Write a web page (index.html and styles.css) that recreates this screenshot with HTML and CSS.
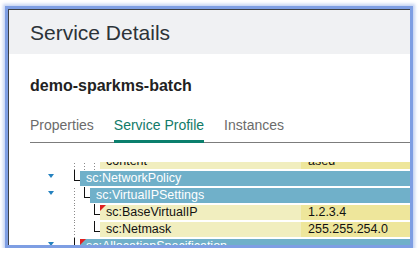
FILE: index.html
```html
<!DOCTYPE html>
<html lang="en">
<head>
    <meta charset="UTF-8">
    <meta name="viewport" content="width=device-width, initial-scale=1.0">
    <title>Service Details</title>
    <link rel="stylesheet" href="styles.css">
</head>
<body>
    <div class="frame">
        <div class="dialog">
            <div class="dialog-header">Service Details</div>
            <div class="dialog-body">
                <h2 class="service-name">demo-sparkms-batch</h2>
                <div class="tabs">
                    <span class="tab">Properties</span>
                    <span class="tab active">Service Profile</span>
                    <span class="tab">Instances</span>
                </div>
                <div class="tree">
                    <div class="tree-inner">
                        <div class="row">
                            <span class="toggle"></span>
                            <span class="guide dotted"></span><span class="guide dotted"></span><span class="guide dotted"></span>
                            <div class="node leaf"><span class="name">content</span><span class="value">ased</span></div>
                        </div>
                        <div class="row">
                            <span class="toggle open"></span>
                            <span class="branch"></span>
                            <div class="node group"><span class="name">sc:NetworkPolicy</span></div>
                        </div>
                        <div class="row">
                            <span class="toggle open"></span>
                            <span class="guide dotted"></span><span class="branch"></span>
                            <div class="node group"><span class="name">sc:VirtualIPSettings</span></div>
                        </div>
                        <div class="row">
                            <span class="toggle"></span>
                            <span class="guide dotted"></span><span class="guide"></span><span class="branch"></span>
                            <div class="node leaf flag"><span class="name">sc:BaseVirtualIP</span><span class="value">1.2.3.4</span></div>
                        </div>
                        <div class="row">
                            <span class="toggle"></span>
                            <span class="guide dotted"></span><span class="guide"></span><span class="branch"></span>
                            <div class="node leaf"><span class="name">sc:Netmask</span><span class="value">255.255.254.0</span></div>
                        </div>
                        <div class="row">
                            <span class="toggle open"></span>
                            <span class="branch"></span>
                            <div class="node group flag"><span class="name">sc:AllocationSpecification</span></div>
                        </div>
                    </div>
                </div>
            </div>
        </div>
    </div>
</body>
</html>
```
FILE: styles.css
```css
body {
    margin: 0;
    background: #fff;
    font-family: "Liberation Sans", Arial, sans-serif;
}

.frame {
    margin: 6px 0 0 5px;
    width: 402px;
    height: 236px;
    border: 3px solid #7e9ee3;
    box-shadow: 0 0 3px 2px rgba(126, 158, 227, 0.45);
}

.dialog {
    box-sizing: border-box;
    height: 236px;
    border-left: 1px solid #3c4046;
    border-top: 1px solid #3c4046;
    overflow: hidden;
    background: #fff;
}

.dialog-header {
    height: 44px;
    box-sizing: border-box;
    padding: 11px 0 0 21px;
    background: #f0f1f3;
    color: #2c3338;
    font-size: 21px;
    line-height: 24px;
}

.dialog-body {
    padding-top: 23px;
}

.service-name {
    margin: 0 0 22px 21px;
    font-size: 16px;
    line-height: 18px;
    font-weight: bold;
    color: #222;
}

.tabs {
    display: flex;
    margin-left: 21px;
    border-bottom: 1px solid #7c7c7c;
}

.tab {
    margin-right: 20px;
    margin-bottom: -1px;
    padding-bottom: 7px;
    border-bottom: 3px solid transparent;
    font-size: 14px;
    line-height: 16px;
    color: #6b6b6b;
}

.tab.active {
    color: #127a69;
    border-bottom-color: #0b7f6d;
}

.tree {
    margin-top: 19px;
    height: 90px;
    overflow: hidden;
}

.tree-inner {
    margin-top: -8px;
}

.row {
    display: flex;
    height: 17px;
    padding-left: 39px;
}

.toggle {
    width: 22px;
    flex: none;
}

.toggle.open::before {
    content: "";
    display: block;
    margin-top: 3px;
    width: 0;
    height: 0;
    border-left: 3.5px solid transparent;
    border-right: 3.5px solid transparent;
    border-top: 4px solid #2582bf;
}

.guide,
.branch {
    position: relative;
    width: 10px;
    flex: none;
}

.guide.dotted::before {
    content: "";
    position: absolute;
    left: 4px;
    top: 0;
    width: 1px;
    height: 17px;
    background: repeating-linear-gradient(to bottom, #8a8a8a 0 1px, transparent 1px 3px);
}

.branch::before {
    content: "";
    position: absolute;
    left: 4px;
    top: -1px;
    width: 5px;
    height: 10px;
    border-left: 1px solid #111;
    border-bottom: 1px solid #111;
}

.node {
    position: relative;
    flex: 1;
    display: flex;
    height: 15px;
    font-size: 12.5px;
    line-height: 15px;
    white-space: nowrap;
    overflow: hidden;
}

.node .name {
    flex: 1;
    padding-left: 6px;
}

.node .value {
    width: 102px;
    padding-left: 7px;
}

.node.leaf {
    background: #f1eebf;
    color: #111;
}

.node.leaf .value {
    background: #eee69b;
}

.node.group {
    background: #70b0c9;
    color: #fff;
}

.node.flag::before {
    content: "";
    position: absolute;
    left: 0;
    top: 0;
    border-top: 6px solid #e02020;
    border-right: 6px solid transparent;
}
```
